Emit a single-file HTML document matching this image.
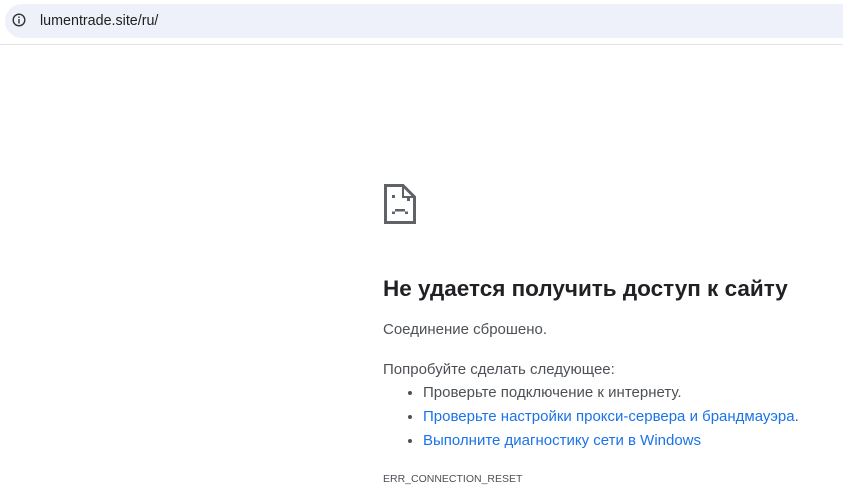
<!DOCTYPE html>
<html><head><meta charset="utf-8"><style>
body{margin:0;width:843px;height:491px;background:#fff;font-family:"Liberation Sans","DejaVu Sans",sans-serif;position:relative;overflow:hidden}
.bar{position:absolute;left:5px;top:4px;width:860px;height:34px;background:#eef1f9;border-radius:17px}
.url{position:absolute;left:40px;top:13px;font-size:14.3px;color:#1f1f1f}
.line{position:absolute;left:0;top:44px;width:843px;height:1px;background:#e3e3e3}
h1{position:absolute;left:383px;top:276px;margin:0;font-size:22.5px;font-weight:bold;color:#202124}
.t{position:absolute;left:383px;font-size:15px;color:#4d5156}
ul{position:absolute;left:383px;top:383px;margin:0;padding-left:40px;font-size:15px;color:#4d5156}
li{height:24px;line-height:19px}
a{color:#1a73e8;text-decoration:none}
</style></head><body>
<div class="bar"></div>
<svg style="position:absolute;left:12px;top:13px" width="14" height="14" viewBox="0 0 14 14">
<circle cx="7" cy="7" r="5.8" fill="none" stroke="#333" stroke-width="1.4"/>
<rect x="6.3" y="3.5" width="1.4" height="1.5" fill="#333"/>
<rect x="6.3" y="6" width="1.4" height="4.5" fill="#333"/>
</svg>
<div class="url">lumentrade.site/ru/</div>
<div class="line"></div>
<svg style="position:absolute;left:380px;top:180px" width="40" height="48" viewBox="0 0 40 48">
<path d="M5.5 5.5H23L34.5 17V42.5H5.5Z" fill="none" stroke="#5f6368" stroke-width="3"/>
<path d="M23 5.5V17H34.5" fill="none" stroke="#5f6368" stroke-width="2"/>
<rect x="12" y="15" width="3" height="3" fill="#5f6368"/>
<rect x="27" y="18" width="3" height="3" fill="#5f6368"/>
<rect x="15" y="29" width="10" height="2.5" fill="#5f6368"/>
<rect x="12" y="31.5" width="3" height="2.5" fill="#5f6368"/>
<rect x="25" y="31.5" width="3" height="2.5" fill="#5f6368"/>
</svg>
<h1>Не удается получить доступ к сайту</h1>
<div class="t" style="top:321px">Соединение сброшено.</div>
<div class="t" style="top:361px">Попробуйте сделать следующее:</div>
<ul>
<li>Проверьте подключение к интернету.</li>
<li><a>Проверьте настройки прокси-сервера и брандмауэра</a>.</li>
<li><a>Выполните диагностику сети в Windows</a></li>
</ul>
<div class="t" style="top:473px;font-size:10.5px">ERR_CONNECTION_RESET</div>
</body></html>
